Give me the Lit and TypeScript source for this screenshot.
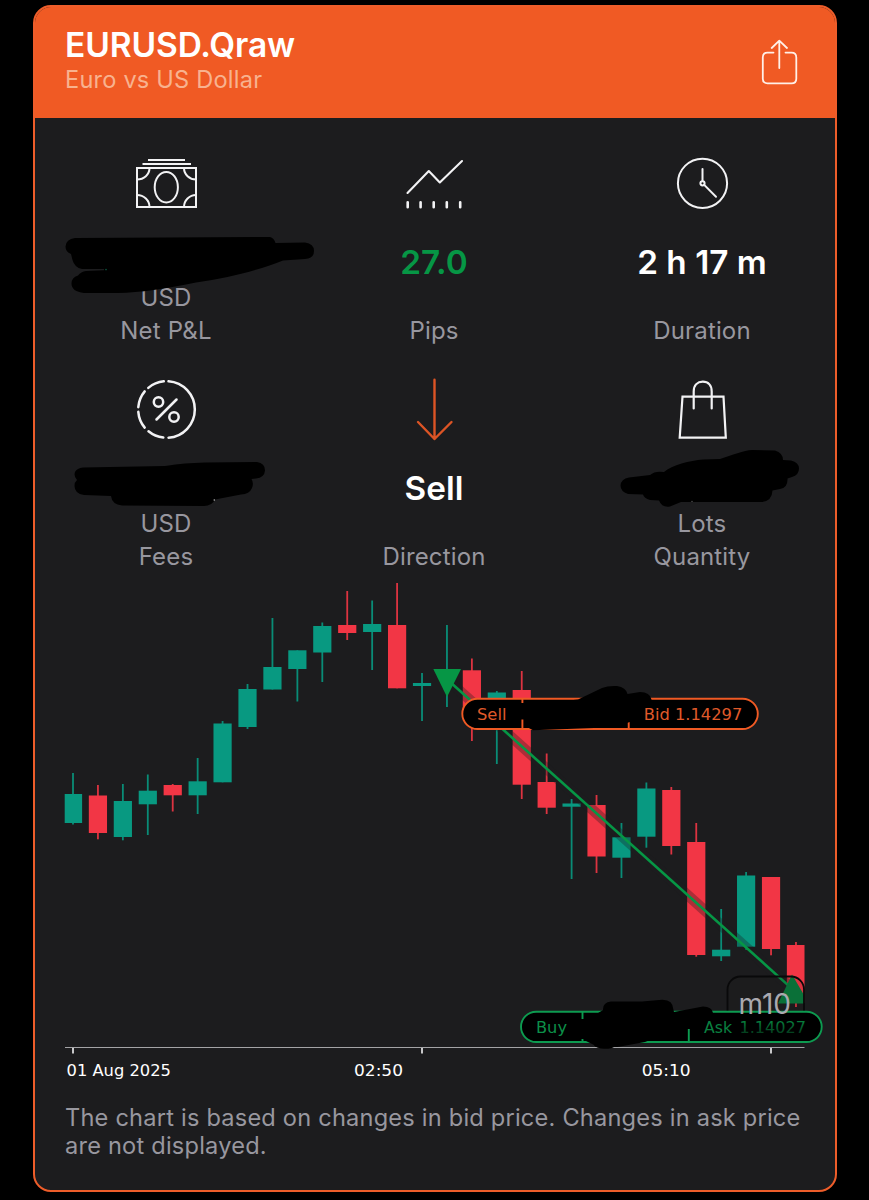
import { LitElement, html, svg, css } from "lit";
import { customElement, property } from "lit/decorators.js";

const UP = "#089981";
const DOWN = "#f23645";
const GREEN = "#069645";
const ORANGE = "#f05a24";

// direction, high, body top, body bottom, low
type Candle = [string, number, number, number, number];
const CANDLES: Candle[] = [
  ["u", 773, 794, 823, 824.5],
  ["d", 785, 795.5, 833, 839.3],
  ["u", 784, 801, 837, 840.3],
  ["u", 774.5, 790.7, 804.3, 835],
  ["d", 784, 785, 795.3, 811.5],
  ["u", 758, 781.3, 795.3, 814],
  ["u", 721, 723.5, 782.3, 782.3],
  ["u", 684, 689, 727, 729],
  ["u", 618, 667, 689.5, 689.5],
  ["u", 650.3, 650.3, 669, 701.5],
  ["u", 622.5, 626, 652.5, 682],
  ["d", 591, 625, 633, 640],
  ["u", 600.5, 624, 632, 670],
  ["d", 583, 625, 688.3, 688.3],
  ["u", 673, 683, 686, 721],
  ["u", 625, 671, 675, 707],
  ["d", 658.5, 670.3, 712, 741],
  ["u", 691, 692.5, 715, 764],
  ["d", 671, 690, 784.7, 799],
  ["d", 753.5, 782, 807.7, 814],
  ["u", 799, 803.5, 806.7, 879],
  ["d", 795, 805, 856.5, 873],
  ["u", 823, 837.3, 857.7, 878],
  ["u", 782.5, 788.5, 836.7, 847.7],
  ["d", 787, 790, 846, 854.5],
  ["d", 823, 842, 955, 956.7],
  ["u", 909, 949.7, 956.3, 961],
  ["u", 872, 875.5, 946.7, 950],
  ["d", 877, 877, 949, 955.3],
  ["d", 942, 945, 1003, 1007],
];

const icons = {
  money: svg`<g stroke-width="2"><rect x="137" y="168" width="59" height="39"/>
    <path d="M142.500 164H191M148 160H185"/>
    <ellipse cx="166.300" cy="187.200" rx="11.600" ry="15.300"/>
    <path d="M149.500 168C149.500 174.500 144 179.500 137 179.500M184 168C184 174.500 189.500 179.500 196 179.500M137 195C144 195 149.500 200.500 149.500 207M196 195C189.500 195 184 200.500 184 207"/></g>`,
  trend: svg`<g stroke-width="2.100" stroke-linecap="round" stroke-linejoin="round"><path d="M407.500 193L428.800 171L439.800 182.500L462 161"/>
    <path stroke-width="2.600" d="M407.700 202.200V207.300M420.600 202.200V207.300M433.700 202.200V207.300M446.800 202.200V207.300M460.200 202.200V207.300"/></g>`,
  clock: svg`<g stroke-width="2"><circle cx="702.500" cy="183.300" r="24.600"/><circle cx="702.500" cy="183.300" r="2.100"/>
    <path stroke-linecap="round" d="M702.500 169V181M704.200 184.900L716 196.700"/></g>`,
  fees: svg`<g stroke-width="2.500" stroke-linecap="round">
    <path d="M168.500 381.270A28.300 28.300 0 0 1 168.500 437.730M163.300 437.600A28.300 28.300 0 0 1 148.500 431.300M144.700 427.600A28.300 28.300 0 0 1 138.300 411.800M138.300 407.200A28.300 28.300 0 0 1 144.700 391.400M148.300 387.900A28.300 28.300 0 0 1 163.800 381.330"/>
    <circle cx="158.500" cy="402" r="4.700"/><circle cx="174" cy="417" r="4.700"/><path d="M176.500 399.500L156.500 419.500"/></g>`,
  arrow: svg`<path stroke="#dc5425" stroke-width="2.400" stroke-linecap="round" stroke-linejoin="round" d="M434.500 379.800V439M418 422L434.500 439L451.500 422"/>`,
  bag: svg`<g stroke-width="2.200" stroke-linecap="round"><path stroke-linejoin="miter" d="M682.500 396.700H723.500L725.800 437.600H679.700Z"/>
    <path d="M693.700 408.500V391.500C693.700 385 697.500 381.700 702.800 381.700S711.700 385 711.700 391.500V408.500"/></g>`,
};

const scribbles = {
  pl: svg`<path d="M75 238L270 237Q274 238 275.500 243L305 242.500Q314 243.500 314 251T305 259L283 260.500C262 269 230 278 196 282.500C165 289 140 292.500 118 293H84Q71.500 291.500 71.500 283.500Q71.500 277.500 78 275.500Q81 271.500 86 271L104 270.300V269L82 269Q74.500 267.500 72.500 260L71 254Q65.500 252 65.500 246.500Q66 239 75 238Z"/><circle cx="106" cy="269.600" r=".8" fill="#0a5a40"/>`,
  fees: svg`<path d="M83 467.500L165 466C180 463.500 190 463 205 462.500L257 462Q265 463 265 470.500Q264.500 477.500 256 478.500L251.500 479Q254 483 252 488Q249.500 494 241 494.500L215 499.500Q212 506 204 506L122 505.500Q112 504.500 111 496L84 495Q74.500 493.500 74.500 486Q74.500 482 77 480Q73.500 476 75 472Q77 468 83 467.500Z"/><circle cx="214.300" cy="500" r=".8" fill="#bbb"/>`,
  lots: svg`<path d="M629 477.500L650 475Q655 470.500 664 472C672 465 690 460.500 703 459.500L720 459C732 455 744 450.500 752 450L775 450.500Q783 453 783 460L791 460.500Q799 462.500 799 468.500Q799 475 792 477L787.500 478.500Q788 488 780 489L772.500 490.500Q772 501 762 502L681 502L670 506.500Q662 508 659 500.500L650 500Q644 498 643 494.500L628 494Q620.500 491.500 620.500 485.500Q621 479 629 477.500Z"/><circle cx="692" cy="501.300" r=".6" fill="#777"/>`,
};

@customElement("metric-cell")
class MetricCell extends LitElement {
  @property({ attribute: false }) icon: unknown;
  @property({ attribute: false }) cover: unknown;
  @property() value = "";
  @property() unit = "";
  @property() label = "";
  @property() tone = "";
  @property({ type: Number }) col = 0;
  @property({ type: Number }) row = 0;

  static styles = css`
    :host { display: block; position: relative; height: 198px; text-align: center; }
    .icon { display: block; width: 268px; height: 68px; overflow: visible; fill: none; stroke: #f2f2f4; }
    .value { margin-top: 28px; height: 36px; line-height: 35px; font-size: 33.300px; font-weight: 600; color: #fff; white-space: pre; }
    .up { color: #069645; }
    .line { height: 33px; line-height: 33px; font-size: 24px; letter-spacing: 0.150px; color: #98979f; }
    .cover { position: absolute; inset: 0; width: 268px; height: 198px; overflow: visible; fill: #000; }
  `;

  render() {
    const x = 32 + this.col * 268;
    const y = 149 + this.row * 226;
    return html`
      <svg class="icon" viewBox="${x} ${y} 268 68">${this.icon}</svg>
      <div class="value ${this.tone}">${this.value}</div>
      <div class="line">${this.unit}</div>
      <div class="line">${this.label}</div>
      ${this.cover ? html`<svg class="cover" viewBox="${x} ${y} 268 198">${this.cover}</svg>` : ""}
    `;
  }
}

@customElement("trade-chart")
class TradeChart extends LitElement {
  static styles = css`
    :host { display: block; }
    .chart { display: block; width: 804px; height: 515px; overflow: visible; font-family: Verdana, "DejaVu Sans", sans-serif; font-size: 16.400px; }
    .period { font-family: Inter, sans-serif; font-size: 28px; fill: #aaa9b0; }
  `;

  candle([dir, high, top, bottom, low]: Candle, i: number) {
    const x = 73 + i * 24.93;
    const left = i === 0 ? 64.7 : x - 9.1;
    const right = i === 29 ? 804.5 : x + 9.1;
    return svg`<g fill=${dir === "u" ? UP : DOWN}>
      <rect x=${x - 0.9} y=${high} width="1.8" height=${low - high} opacity=".9"/>
      <rect x=${left} y=${top} width=${right - left} height=${bottom - top}/></g>`;
  }

  render() {
    return html`<svg class="chart" viewBox="32 575 804 515">
      <defs>
        <linearGradient id="fade" gradientUnits="userSpaceOnUse" x1="0" y1="1020" x2="0" y2="1034">
          <stop offset="0" stop-color="#078440"/><stop offset="1" stop-color="#043a1c"/>
        </linearGradient>
      </defs>
      ${CANDLES.map((c, i) => this.candle(c, i))}
      <path d="M447 679.300L793 989.600" stroke="#1c1c1e" stroke-opacity=".32" stroke-width="10.500"/>
      <path d="M447 679.300L793 989.600" stroke=${GREEN} stroke-width="2.600"/>
      <path d="M433.300 669H461L447 697Z" fill=${GREEN}/>
      <path d="M792 974.500L804 995V1003.500H778Z" fill="#087a3c"/>

      <rect x="727.500" y="976.500" width="76.500" height="56" rx="13" fill="#1c1c1e" fill-opacity=".1" stroke="#09090a" stroke-width="1.800"/>

      <g fill="#000" stroke=${ORANGE} stroke-width="1.900">
        <rect x="462.300" y="698.700" width="295.500" height="30.300" rx="15.150"/>
        <path d="M522.400 699V703M522.400 719.500V729M628.700 722V729"/>
      </g>
      <path d="M527 705L578 699.500L602 688Q608 685.500 617 686Q626 687.500 627.500 694L640 692Q650 692 651.500 699.500V710L630 722C615 727 600 728 580 728.500L533 730.200L527 727Z" fill="#000"/>
      <g fill="#e05a2a">
        <text x="477" y="720" textLength="29.500" lengthAdjust="spacingAndGlyphs">Sell</text>
        <text x="643.800" y="720" textLength="98.500" lengthAdjust="spacingAndGlyphs">Bid 1.14297</text>
      </g>

      <g fill="#000" stroke="#0d9b50" stroke-width="1.900">
        <rect x="521" y="1011.700" width="300.700" height="30.300" rx="15.150"/>
        <path d="M582.500 1012V1019M582.500 1039V1042M688.800 1029V1042"/>
      </g>
      <path d="M603 1010Q602.500 1002.500 611 1001.500L642 1001.500L662 999.800Q673 999.500 673.500 1010L674 1012L703 1006.500Q712 1006.500 713 1013L712 1019L690 1025L660 1036L645 1042L612 1048Q597 1050 594 1045L584 1040L580 1024Z" fill="#000"/>
      <text x="536" y="1033" textLength="31" lengthAdjust="spacingAndGlyphs" fill="#0c8f49">Buy</text>
      <text x="704" y="1033" textLength="28" lengthAdjust="spacingAndGlyphs" fill="#0a8040">Ask</text>
      <text x="739.500" y="1033" textLength="66.500" lengthAdjust="spacingAndGlyphs" fill="url(#fade)">1.14027</text>
      <text class="period" x="738.500" y="1014" textLength="52.500">m10</text>

      <path d="M65 1047.500H804.500" stroke="#a3a3a6" stroke-width="1"/>
      <path d="M73 1048V1053.500M422 1048V1053.500M771 1048V1053.500" stroke="#c8c8ca" stroke-width="2"/>
      <path d="M594 1044L620 1044L612 1048Q597 1050 594 1045Z" fill="#000"/>
      <g fill="#fff">
        <text x="66.500" y="1076" textLength="104.500" lengthAdjust="spacingAndGlyphs">01 Aug 2025</text>
        <text x="354" y="1076" textLength="49" lengthAdjust="spacingAndGlyphs">02:50</text>
        <text x="641.700" y="1076" textLength="49" lengthAdjust="spacingAndGlyphs">05:10</text>
      </g>
    </svg>`;
  }
}

@customElement("app-root")
class AppRoot extends LitElement {
  static styles = css`
    :host { display: block; box-sizing: border-box; height: 1200px; padding: 5px 0 0 32.500px; overflow: hidden; background: #000; font-family: Inter, "Noto Sans", sans-serif; }
    .card { box-sizing: border-box; width: 804px; height: 1187px; border: 2px solid #ee5d2a; border-radius: 18px; background: #1c1c1e; overflow: hidden; }
    .head { display: flex; justify-content: space-between; box-sizing: border-box; height: 111px; padding: 18px 37px 0 30.500px; background: #f05a24; }
    .title { height: 40px; margin: 0; line-height: 40px; font-size: 33.500px; font-weight: 600; letter-spacing: -0.120px; color: #fff; }
    .pair { line-height: 29px; font-size: 23.600px; letter-spacing: 0.200px; color: #f8b28f; }
    .share { width: 38px; height: 48px; margin-top: 14px; fill: none; stroke: #fff0e8; stroke-width: 1.800; stroke-linecap: round; stroke-linejoin: round; }
    .metrics { display: grid; grid-template-columns: repeat(3, 268px); gap: 28px 0; margin: 31px 0 0 -2.500px; width: 804px; }
    .plot { display: block; margin: 2px 0 0 -2.500px; }
    .note { margin: 14px 30.500px 0; line-height: 28px; font-size: 23.600px; letter-spacing: 0.210px; color: #98979f; white-space: nowrap; }
  `;

  render() {
    return html`<main class="card">
      <header class="head">
        <div>
          <h1 class="title">EURUSD.Qraw</h1>
          <div class="pair">Euro vs US Dollar</div>
        </div>
        <svg class="share" viewBox="760 39 38 48">
          <path d="M773.500 52.600H767.500Q762.800 52.600 762.800 57.500V78.700Q762.800 83.300 767.500 83.300H791.500Q796.300 83.300 796.300 78.700V57.500Q796.300 52.600 791.500 52.600H785.500M779.300 68V41M771.700 48L779.300 40.700L787 48"/>
        </svg>
      </header>
      <section class="metrics">
        <metric-cell .icon=${icons.money} .cover=${scribbles.pl} unit="USD" label="Net P&amp;L" col="0" row="0"></metric-cell>
        <metric-cell .icon=${icons.trend} value="27.0" tone="up" label="Pips" col="1" row="0"></metric-cell>
        <metric-cell .icon=${icons.clock} value="2 h 17 m" label="Duration" col="2" row="0"></metric-cell>
        <metric-cell .icon=${icons.fees} .cover=${scribbles.fees} unit="USD" label="Fees" col="0" row="1"></metric-cell>
        <metric-cell .icon=${icons.arrow} value="Sell" label="Direction" col="1" row="1"></metric-cell>
        <metric-cell .icon=${icons.bag} .cover=${scribbles.lots} unit="Lots" label="Quantity" col="2" row="1"></metric-cell>
      </section>
      <trade-chart class="plot"></trade-chart>
      <div class="note">The chart is based on changes in bid price. Changes in ask price<br />are not displayed.</div>
    </main>`;
  }
}
